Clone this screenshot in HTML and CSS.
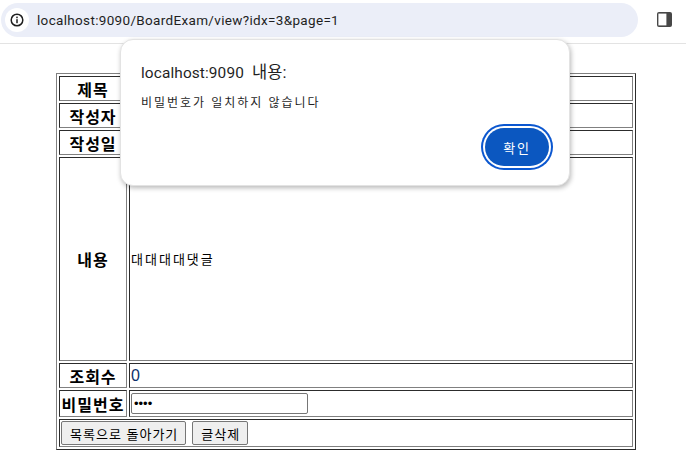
FILE: index.html
```html
<!DOCTYPE html>
<html lang="ko">
<head>
<meta charset="utf-8">
<title>BoardExam</title>
<link rel="stylesheet" href="styles.css">
</head>
<body>
<header class="toolbar">
  <div class="omnibox">
    <span class="site-chip">
      <svg width="14" height="14" viewBox="0 0 14 14" aria-hidden="true"><circle cx="7" cy="7" r="5.8" fill="none" stroke="#1f1f1f" stroke-width="1.5"/><rect x="6.25" y="6.2" width="1.5" height="4" fill="#1f1f1f"/><rect x="6.25" y="3.6" width="1.5" height="1.6" fill="#1f1f1f"/></svg>
    </span>
    <span class="url">localhost:9090/BoardExam/view?idx=3&amp;page=1</span>
  </div>
  <span class="side-btn">
    <svg width="15" height="15" viewBox="0 0 15 15" aria-hidden="true"><rect x="0" y="0" width="15" height="15" rx="2" fill="#474747"/><rect x="1.4" y="1.6" width="8" height="11.8" fill="#fff"/></svg>
  </span>
</header>
<main class="page">
  <table class="board" border="1">
    <tr class="r-title"><th class="label">제목</th><td></td></tr>
    <tr class="r-author"><th class="label">작성자</th><td></td></tr>
    <tr class="r-date"><th class="label">작성일</th><td></td></tr>
    <tr class="r-body"><th class="label">내용</th><td class="content">대대대대댓글</td></tr>
    <tr class="r-views"><th class="label">조회수</th><td class="count">0</td></tr>
    <tr class="r-pass"><th class="label">비밀번호</th><td><input class="pass" type="password" value="1234"></td></tr>
    <tr class="r-actions"><td colspan="2"><div class="actions"><button class="btn" type="button">목록으로 돌아가기</button><button class="btn" type="button">글삭제</button></div></td></tr>
  </table>
</main>
<div class="dialog" role="alertdialog">
  <div class="dialog-title">localhost:9090 <span class="ko">내용:</span></div>
  <div class="dialog-msg">비밀번호가 일치하지 않습니다</div>
  <div class="dialog-actions"><button class="ok" type="button">확인</button></div>
</div>
</body>
</html>
```
FILE: styles.css
```css
html, body {
  margin: 0;
  padding: 0;
  background: #fff;
  overflow: hidden;
}
body {
  width: 686px;
  height: 464px;
  position: relative;
  font-family: "Liberation Serif", "Noto Sans CJK KR", serif;
  color: #000;
}
.toolbar {
  height: 43px;
  border-bottom: 1px solid #e3e3e3;
  display: flex;
  align-items: flex-start;
}
.omnibox {
  width: 637px;
  height: 34px;
  margin: 3px 0 0 1px;
  background: #ebeef8;
  border-radius: 17px;
  display: flex;
  align-items: center;
  padding-left: 4px;
  box-sizing: border-box;
}
.site-chip {
  width: 24px;
  height: 24px;
  border-radius: 50%;
  background: #fff;
  display: flex;
  align-items: center;
  justify-content: center;
  margin-right: 8px;
}
.url {
  font: 13.5px "Roboto", "Open Sans", sans-serif;
  letter-spacing: .33px;
  color: #1f1f1f;
}
.side-btn {
  margin: 12px 0 0 19px;
  display: flex;
}
.page {
  padding: 29px 0 0 56px;
}
.board {
  width: 580px;
  font-size: 16px;
  border-spacing: 2px;
  table-layout: fixed;
}
.board th, .board td {
  padding: 1px;
  line-height: 18px;
  box-sizing: border-box;
}
.label {
  width: 68px;
  white-space: nowrap;
  font-family: "Noto Sans CJK KR", sans-serif;
  font-size: 16px;
  letter-spacing: 1px;
}
.r-title th, .r-title td { height: 25px; }
.r-author th, .r-author td { height: 25px; }
.r-date th, .r-date td { height: 25px; }
.r-body th, .r-body td { height: 204px; }
.r-views th, .r-views td { height: 25px; }
.r-pass th, .r-pass td { height: 27px; }
.r-actions td { height: 28px; }
.content {
  font: 13px/18px "Noto Sans CJK KR", sans-serif;
  letter-spacing: 2px;
}
.count {
  font-family: "Liberation Sans", sans-serif;
  color: #0b2f6b;
}
.pass {
  width: 177px;
  height: 21px;
  box-sizing: border-box;
  padding: 1px 2px;
  border: 1px solid #767676;
  border-radius: 2px;
  font: 13px "Liberation Sans", sans-serif;
  display: block;
}
.actions {
  display: flex;
  gap: 6px;
}
.btn {
  height: 24px;
  padding: 0 7px 0 8px;
  margin: 0;
  border: 1px solid #767676;
  border-radius: 2px;
  background: #efefef;
  font: 13px "Noto Sans CJK KR", sans-serif;
  letter-spacing: 1px;
  color: #000;
}
.dialog {
  position: absolute;
  left: 120px;
  top: 39px;
  width: 450px;
  height: 147px;
  box-sizing: border-box;
  background: #fff;
  border: 1px solid #e3e3e3;
  border-radius: 13px;
  box-shadow: 1px 2px 5px rgba(0, 0, 0, .28);
  padding: 23px 20px 0;
}
.dialog-title {
  font: 15.4px/20px "Roboto", "Noto Sans CJK KR", sans-serif;
  letter-spacing: .12px;
  color: #1f1f1f;
}
.ko {
  margin-left: 4px;
  font-size: 16.5px;
}
.dialog-msg {
  margin-top: 10px;
  font: 12px/18px "Noto Sans CJK KR", sans-serif;
  letter-spacing: 1.95px;
  color: #1f1f1f;
}
.dialog-actions {
  display: flex;
  justify-content: flex-end;
  margin-top: 14px;
}
.ok {
  width: 64px;
  height: 38px;
  margin: 3px 0 0 0;
  border: 0;
  border-radius: 19px;
  background: #0b57c0;
  box-shadow: 0 0 0 2px #fff, 0 0 0 4px #0b57d0;
  color: #fff;
  font: 13px "Noto Sans CJK KR", sans-serif;
  letter-spacing: 1.8px;
}
```
